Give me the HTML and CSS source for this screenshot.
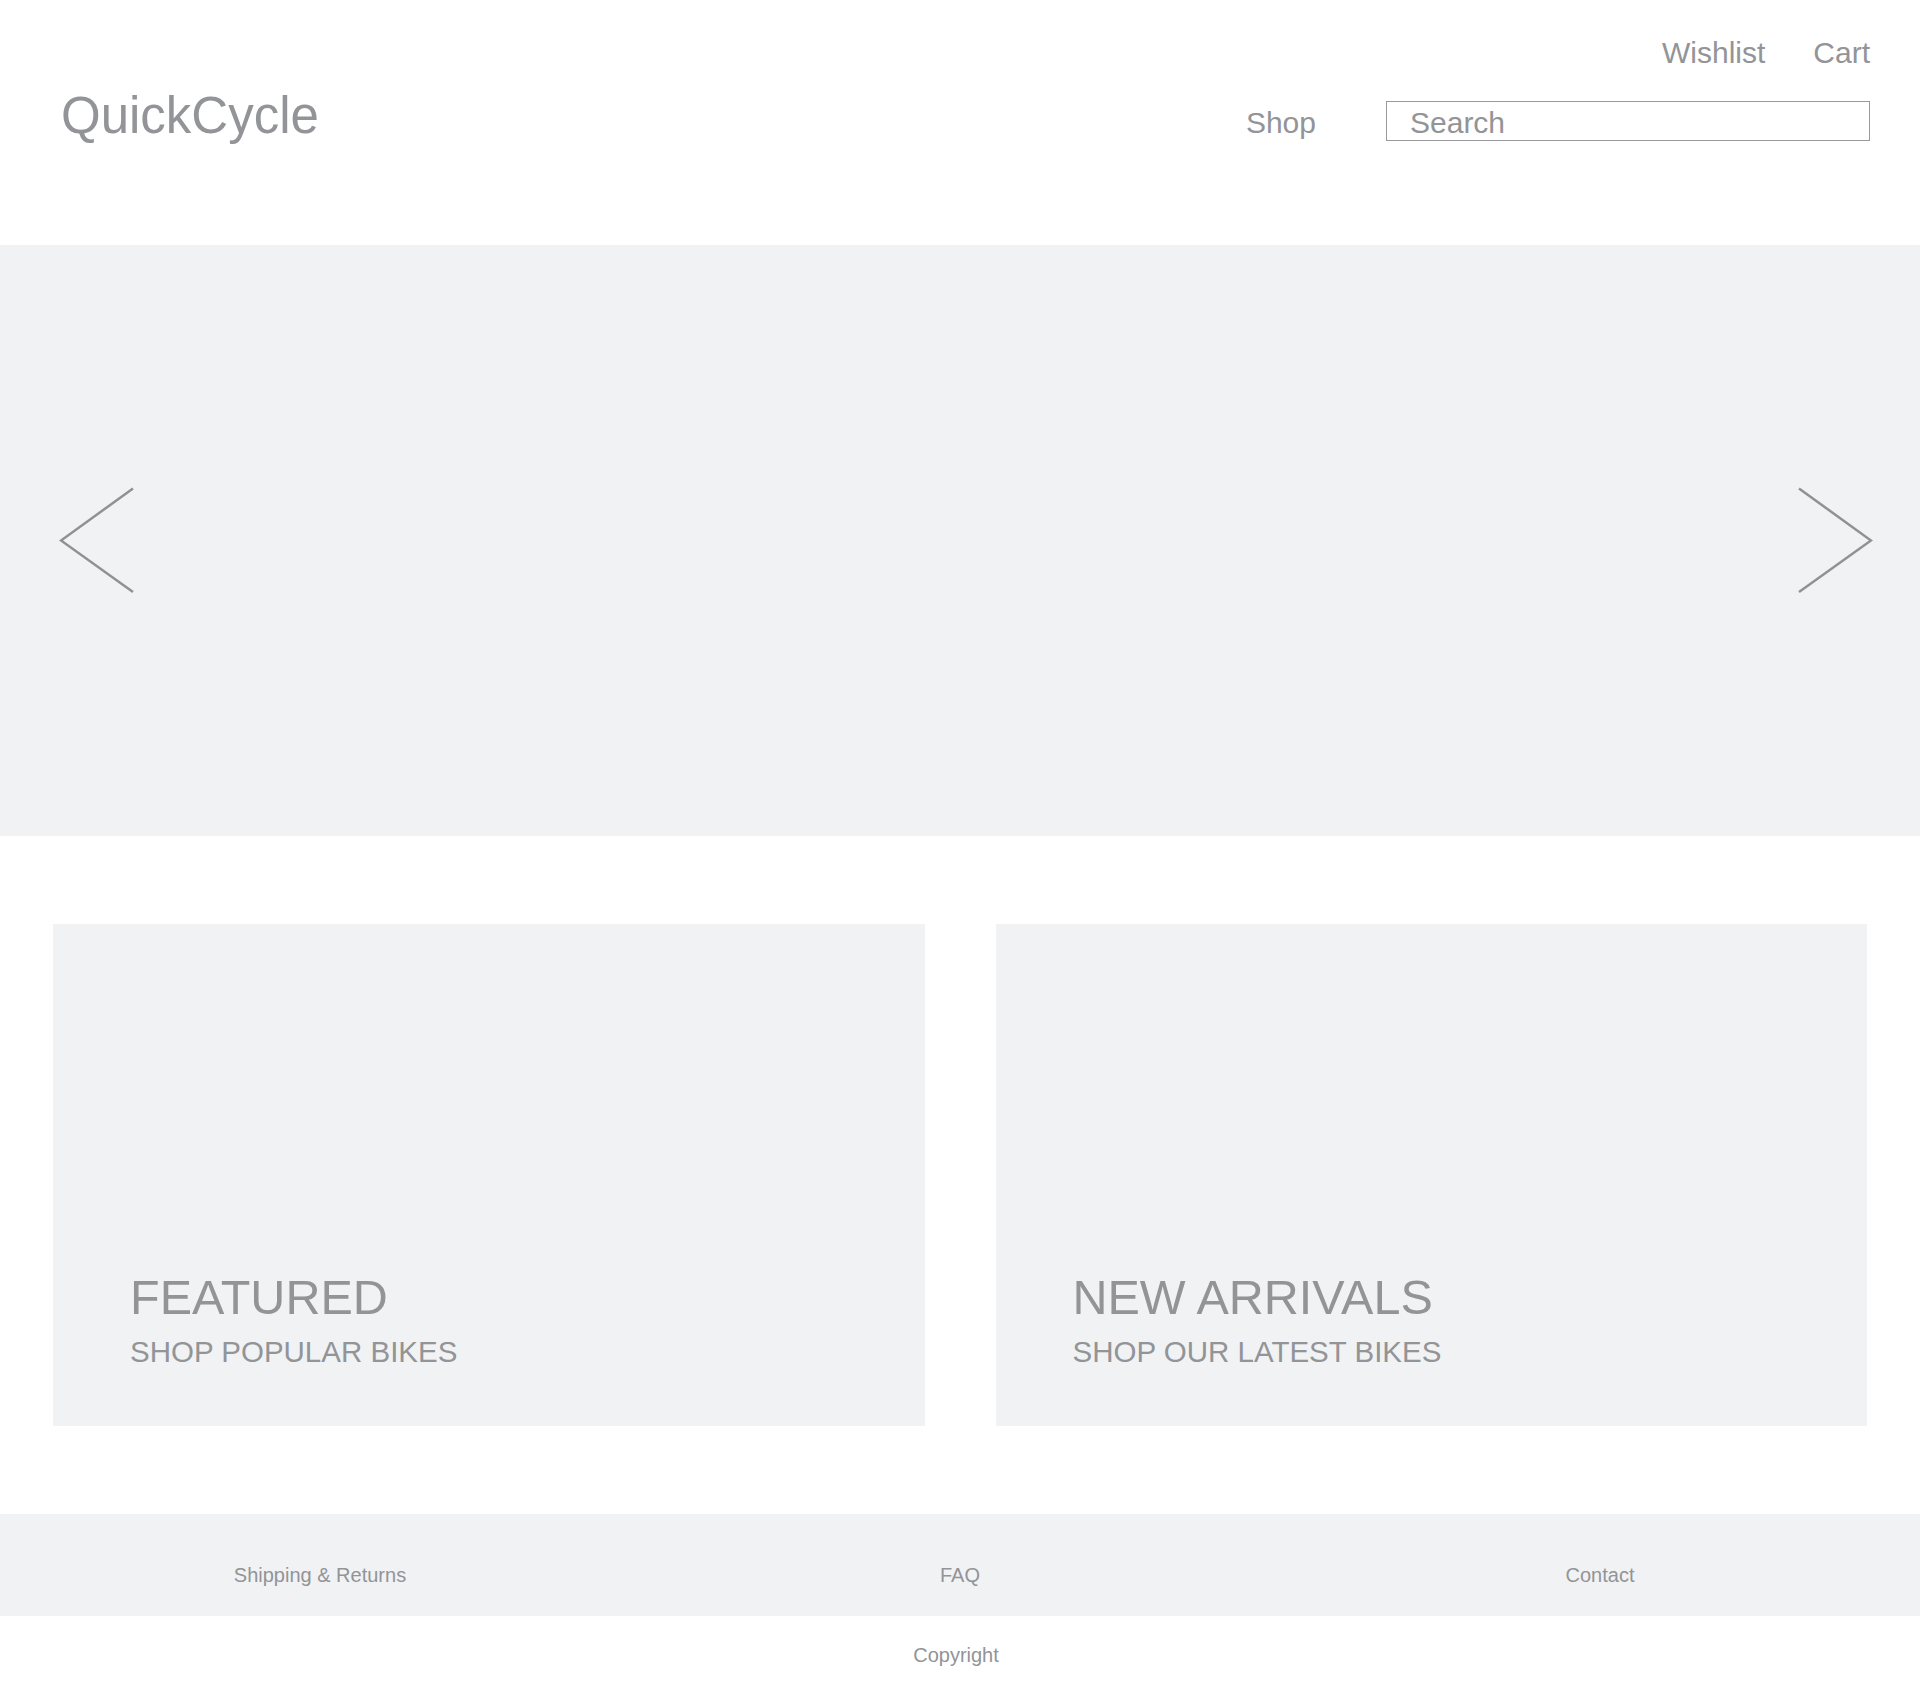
FILE: index.html
```html
<!DOCTYPE html>
<html lang="en">
<head>
<meta charset="utf-8">
<title>QuickCycle</title>
<link rel="stylesheet" href="styles.css">
</head>
<body>
<header class="site-header">
  <nav class="utility-nav">
    <a class="utility-link" href="#">Wishlist</a>
    <a class="utility-link" href="#">Cart</a>
  </nav>
  <div class="main-bar">
    <a class="logo" href="#">QuickCycle</a>
    <div class="main-nav">
      <a class="nav-link" href="#">Shop</a>
      <input class="search" type="text" placeholder="Search" aria-label="Search">
    </div>
  </div>
</header>

<section class="hero">
  <button class="hero-arrow hero-arrow-left" aria-label="Previous">
    <svg width="76" height="107" viewBox="0 0 76 107"><polyline points="74,1.5 2,53.5 74,105" fill="none" stroke="#909194" stroke-width="2.5"/></svg>
  </button>
  <button class="hero-arrow hero-arrow-right" aria-label="Next">
    <svg width="76" height="107" viewBox="0 0 76 107"><polyline points="2,1.5 74,53.5 2,105" fill="none" stroke="#909194" stroke-width="2.5"/></svg>
  </button>
</section>

<section class="promos">
  <a class="promo" href="#">
    <span class="promo-title">FEATURED</span>
    <span class="promo-sub">SHOP POPULAR BIKES</span>
  </a>
  <a class="promo" href="#">
    <span class="promo-title">NEW ARRIVALS</span>
    <span class="promo-sub">SHOP OUR LATEST BIKES</span>
  </a>
</section>

<footer class="site-footer">
  <nav class="footer-links">
    <a class="footer-link" href="#">Shipping &amp; Returns</a>
    <a class="footer-link" href="#">FAQ</a>
    <a class="footer-link" href="#">Contact</a>
  </nav>
  <div class="copyright">Copyright</div>
</footer>
</body>
</html>
```

FILE: styles.css
```css
* {
  box-sizing: border-box;
}

html, body {
  margin: 0;
  padding: 0;
}

body {
  background: #ffffff;
  color: #929497;
  font-family: "Liberation Sans", Arial, Helvetica, sans-serif;
}

a {
  color: inherit;
  text-decoration: none;
}

/* Header */
.site-header {
  height: 245px;
  padding: 35px 50px 0 61px;
  display: flex;
  flex-direction: column;
}

.utility-nav {
  display: flex;
  justify-content: flex-end;
  gap: 48px;
}

.utility-link {
  font-size: 30px;
  line-height: 36px;
}

.main-bar {
  margin-top: 16px;
  display: flex;
  justify-content: space-between;
  align-items: baseline;
}

.logo {
  font-size: 51px;
  line-height: 58px;
}

.main-nav {
  display: flex;
  align-items: baseline;
  gap: 70px;
}

.nav-link {
  font-size: 30px;
  line-height: 36px;
}

.search {
  width: 484px;
  height: 40px;
  margin: 0;
  padding: 5px 10px 0 23px;
  border: 1px solid #9a9b9e;
  border-radius: 0;
  background: #ffffff;
  font-family: inherit;
  font-size: 30px;
  color: #929497;
  outline: none;
}

.search::placeholder {
  color: #929497;
  opacity: 1;
}

/* Hero */
.hero {
  height: 591px;
  background: #f1f2f4;
  display: flex;
  justify-content: space-between;
  align-items: center;
  padding: 0 47px 0 59px;
}

.hero-arrow {
  display: block;
  padding: 0;
  margin: 0;
  border: 0;
  background: none;
  cursor: pointer;
  line-height: 0;
}

.hero-arrow svg {
  display: block;
}

/* Promo cards */
.promos {
  padding: 88px 53px;
  display: grid;
  grid-template-columns: 1fr 1fr;
  gap: 71px;
}

.promo {
  height: 502px;
  background: #f1f2f4;
  display: flex;
  flex-direction: column;
  justify-content: flex-end;
  padding: 0 40px 57px 77px;
}

.promo-title {
  font-size: 48.5px;
  line-height: 52px;
}

.promo-sub {
  margin-top: 12px;
  font-size: 29.5px;
  line-height: 34px;
}

/* Footer */
.footer-links {
  height: 102px;
  background: #f1f2f4;
  display: grid;
  grid-template-columns: repeat(3, 1fr);
  padding-top: 49px;
}

.footer-link {
  text-align: center;
  font-size: 20px;
  line-height: 24px;
}

.copyright {
  height: 66px;
  padding: 27px 8px 0 0;
  text-align: center;
  font-size: 20px;
  line-height: 24px;
}
```
